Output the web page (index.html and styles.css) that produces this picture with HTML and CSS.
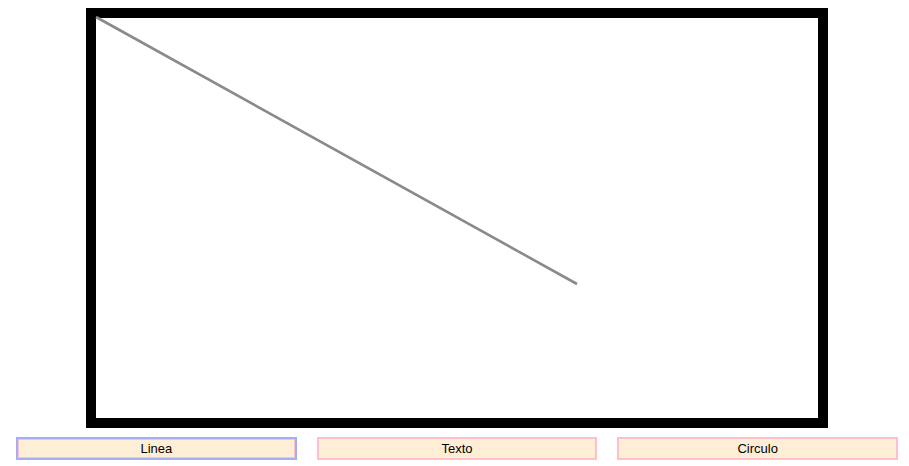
FILE: index.html
```html
<!DOCTYPE html>
<html>
<head>
<meta charset="utf-8">
<link rel="stylesheet" href="styles.css">
</head>
<body>
<div class="board">
  <svg class="drawing" width="722" height="400" viewBox="0 0 722 400">
    <line x1="0" y1="-1" x2="481" y2="266" stroke="#8a8a8a" stroke-width="2.6" stroke-linecap="butt"/>
  </svg>
</div>
<div class="tools">
  <button class="tool active">Linea</button>
  <button class="tool">Texto</button>
  <button class="tool">Circulo</button>
</div>
</body>
</html>
```
FILE: styles.css
```css
html, body {
  margin: 0;
  padding: 0;
  background: #ffffff;
}
body {
  padding: 8px;
  font-family: "Liberation Sans", Arial, sans-serif;
}
.board {
  width: 722px;
  height: 400px;
  border: 10px solid #000;
  margin-left: 78px;
  background: #fff;
}
.drawing {
  display: block;
  overflow: visible;
}
.tools {
  display: flex;
  gap: 20px;
  width: 882px;
  margin-left: 8px;
  margin-top: 9px;
}
.tool {
  flex: 1 1 0;
  height: 23px;
  margin: 0;
  padding: 0;
  border: 2px solid #ffc0cb;
  background: #ffeed6;
  color: #000;
  font-family: "Liberation Sans", Arial, sans-serif;
  font-size: 13px;
  line-height: 19px;
  text-align: center;
}
.tool.active {
  border-color: #a3aef5;
  box-shadow: inset 0 0 0 1px #ffc0cb;
}
```
